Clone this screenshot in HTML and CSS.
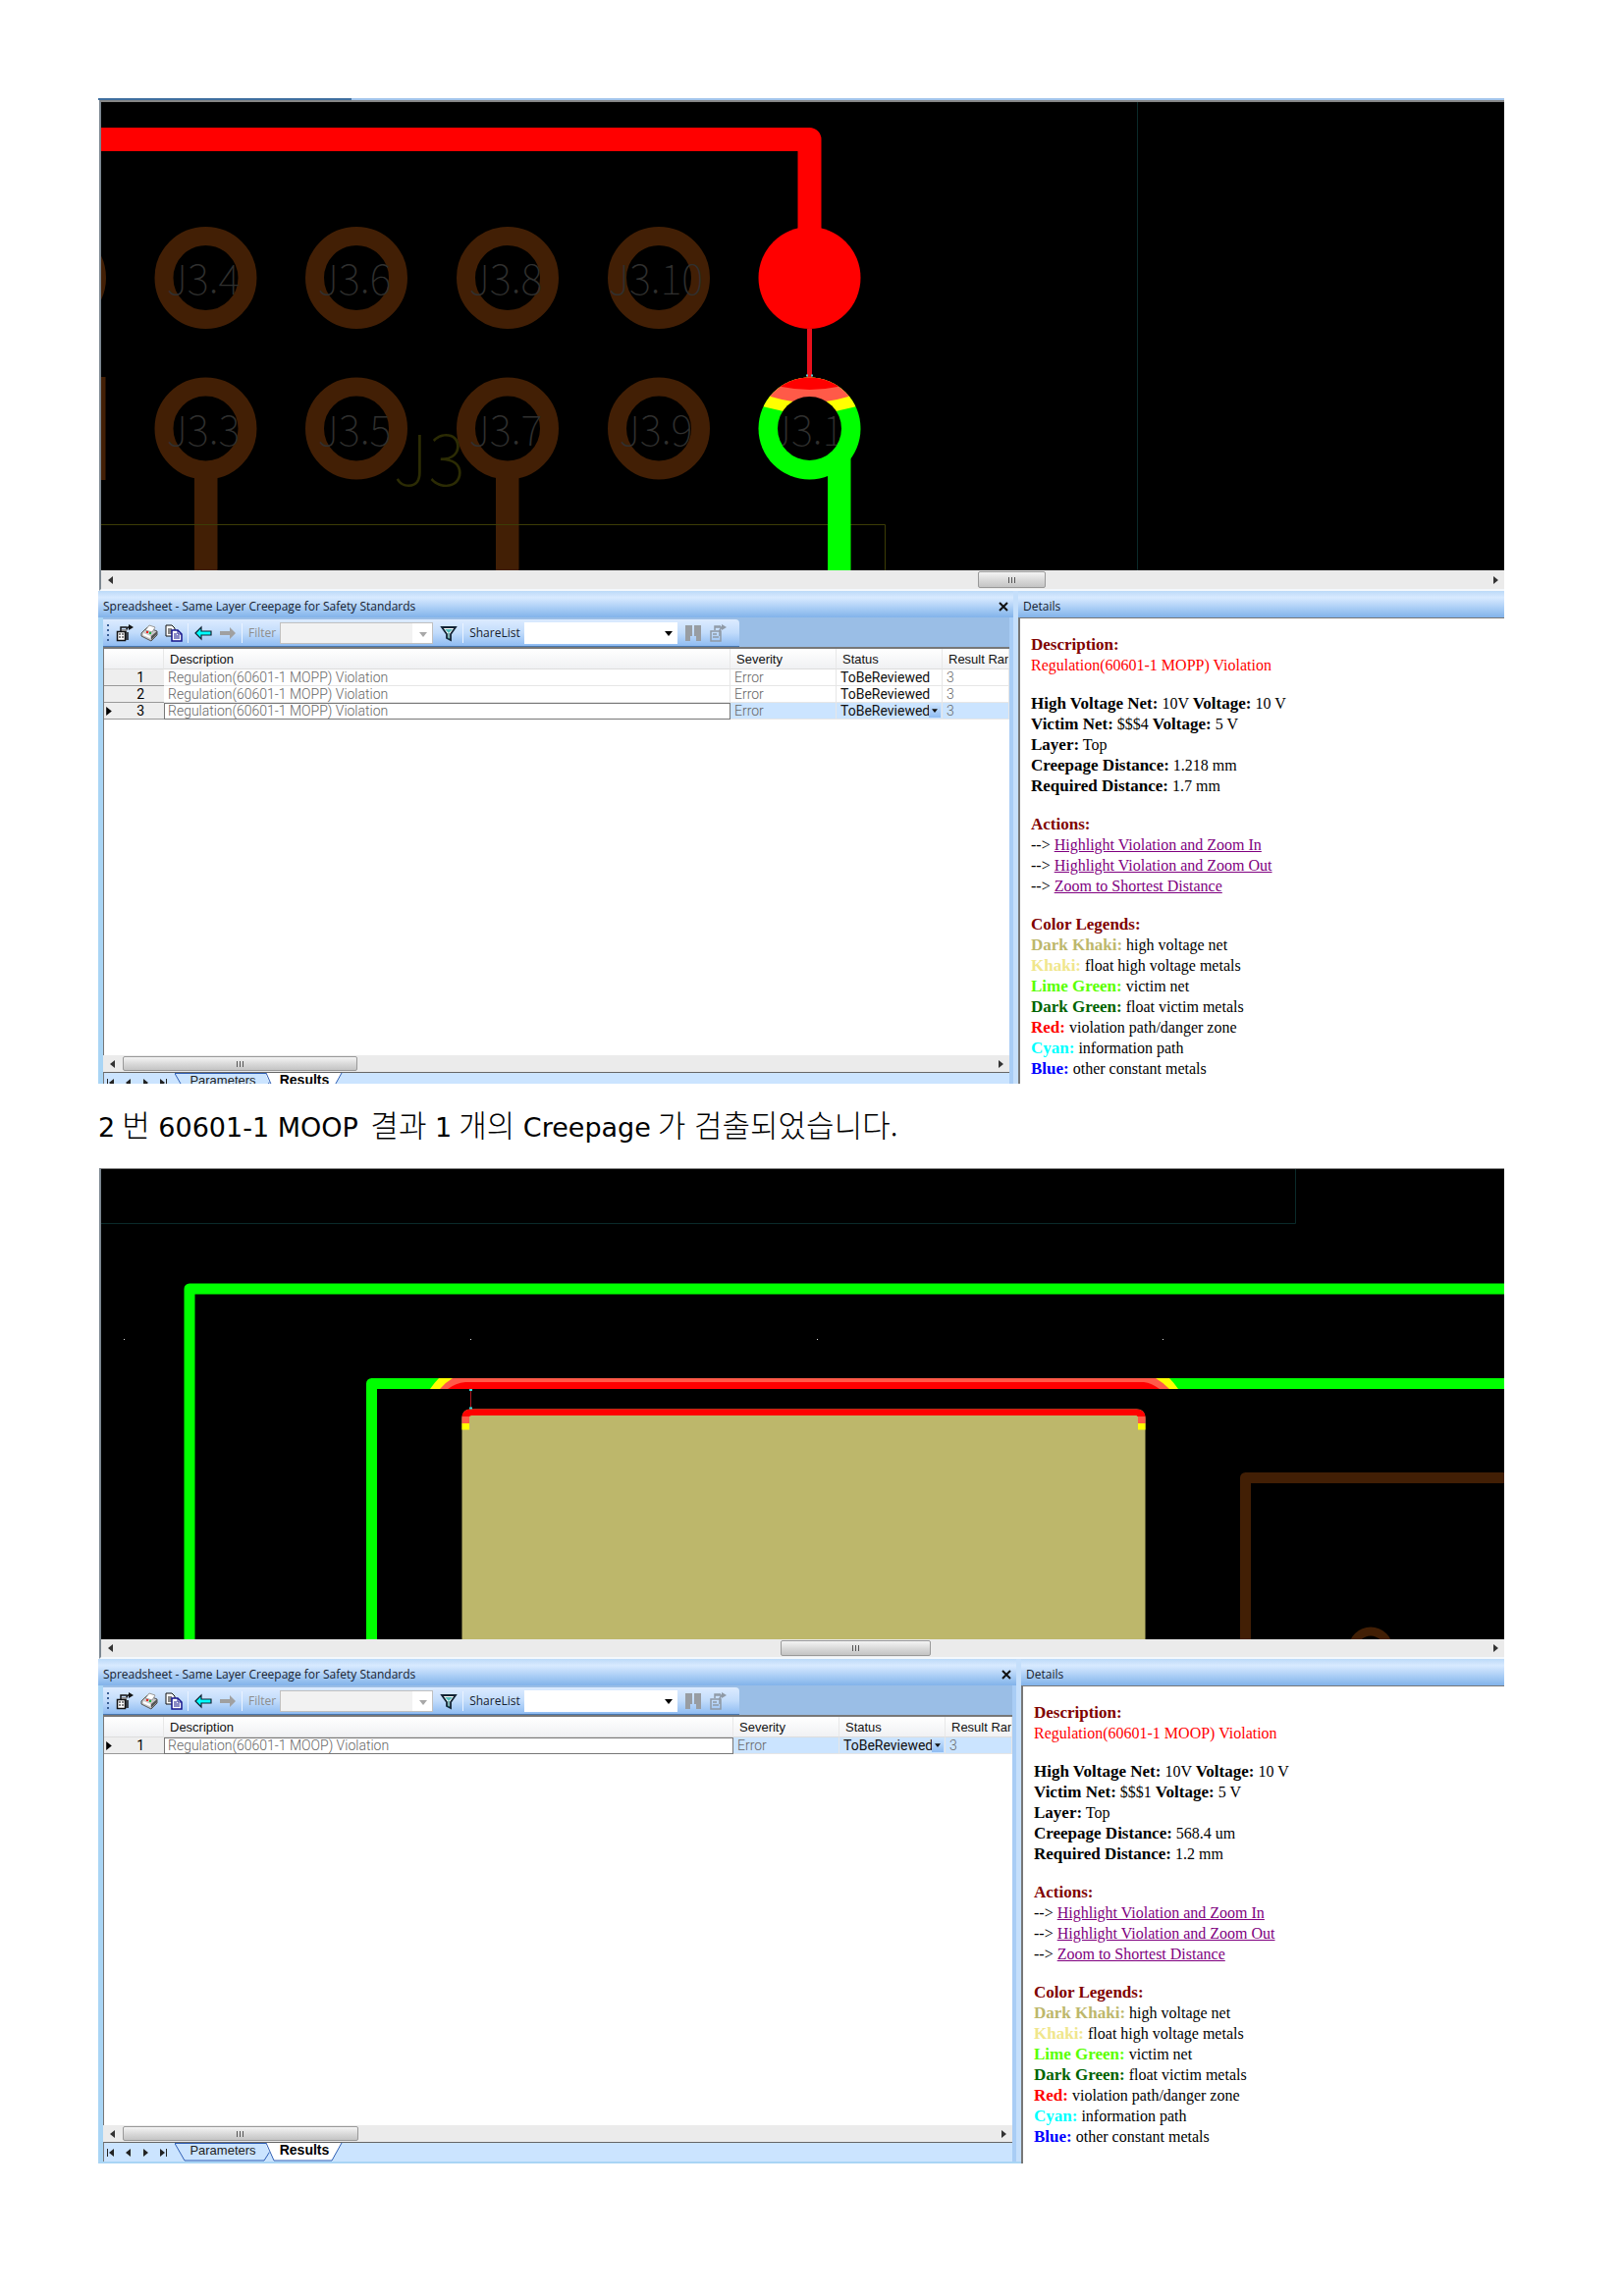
FILE: index.html
```html
<!DOCTYPE html>
<html lang="ko">
<head>
<meta charset="utf-8">
<title>Creepage 검출 결과</title>
<link rel="stylesheet" href="styles.css">
</head>
<body>
<svg class="symbols" aria-hidden="true">
  <symbol id="i-props" viewBox="0 0 18 18"><path d="M1.500 7.500h8v9h-8z" fill="#fff" stroke="#111" stroke-width="1.500"/><path d="M3 10h2M6 10h2M3 13h2M6 13h2" stroke="#111"/><path d="M5 7V3h6M10 16V7l2-4h3M12 16V8" fill="none" stroke="#111" stroke-width="1.500"/><path d="M6 5h5v2H6z" fill="#888"/><path d="M13 0l5 3-5 3z" fill="#111"/></symbol>
  <symbol id="i-print" viewBox="0 0 18 18"><path d="M1 9l6-6 10 4v4l-6 6-10-5z" fill="#c9c9c9" stroke="#555"/><path d="M5 6l4-5 6 2-3 5z" fill="#fff" stroke="#999"/><path d="M11 16l6-6v-3l-6 5z" fill="#555"/><path d="M3 10l7 3" stroke="#fff" stroke-width="2"/><path d="M6 8h2" stroke="#e22" stroke-width="2"/><path d="M9 9h2" stroke="#2b4" stroke-width="2"/></symbol>
  <symbol id="i-copy" viewBox="0 0 18 18"><path d="M1 1h6l3 3v8H1z" fill="#fff" stroke="#111"/><path d="M3 5h4M3 7h5M3 9h5" stroke="#111"/><path d="M7 6h6l4 4v7H7z" fill="#fff" stroke="#14148c" stroke-width="1.500"/><path d="M13 6v4h4M9 10h3M9 12h6M9 14h6" fill="none" stroke="#14148c"/></symbol>
  <symbol id="i-back" viewBox="0 0 18 18"><path d="M1 9l6-6v4h10v4H7v4z" fill="#0ff" stroke="#123" stroke-width="1.200"/></symbol>
  <symbol id="i-forward" viewBox="0 0 18 18"><path d="M17 9l-6-6v4H1v4h10v4z" fill="#a0a0a0"/></symbol>
  <symbol id="i-filter" viewBox="0 0 18 18"><path d="M2 3h14l-5 7v6l-4-2v-4z" fill="#fff" stroke="#123" stroke-width="1.800"/><path d="M5 5h8l-4 4z" fill="#5bb"/><path d="M9 9v6" stroke="#066"/></symbol>
  <symbol id="i-find" viewBox="0 0 18 18"><path d="M1 1h7v11H6v5H1zM10 1h7v16h-5v-5h-2z" fill="#989da3"/></symbol>
  <symbol id="i-export" viewBox="0 0 18 18"><path d="M2 7h10v10H2zM6 6V2h6" fill="none" stroke="#8f99a5" stroke-width="1.500"/><path d="M4 10h4M4 13h6M11 12V6l2-3h3M6 3h8" fill="none" stroke="#8f99a5" stroke-width="1.500"/><path d="M13 0l5 3-5 3z" fill="#8f99a5"/></symbol>
  <symbol id="i-down" viewBox="0 0 8 5"><path d="M0 0h8L4 5z" fill="currentColor"/></symbol>
  <symbol id="i-left" viewBox="0 0 5 8"><path d="M5 0v8L0 4z" fill="currentColor"/></symbol>
  <symbol id="i-right" viewBox="0 0 5 8"><path d="M0 0v8l5-4z" fill="currentColor"/></symbol>
  <symbol id="i-first" viewBox="0 0 7 8"><path d="M0 0h1v8H0zM7 0v8L2 4z" fill="currentColor"/></symbol>
  <symbol id="i-last" viewBox="0 0 7 8"><path d="M6 0h1v8H6zM0 0v8l5-4z" fill="currentColor"/></symbol>
  <symbol id="i-close" viewBox="0 0 10 10"><path d="M1 1l8 8M9 1l-8 8" stroke="#111" stroke-width="2"/></symbol>
</svg>
<main class="page">

<section class="shot shot-mopp" aria-label="60601-1 MOPP">
  <div class="board">
    <svg viewBox="103 104 1429 477" role="img" aria-label="J3 connector">
      <rect x="103" y="104" width="1429" height="477" fill="#000"/>
      <g fill="none" stroke="#421f05" stroke-width="19">
        <circle cx="56" cy="283" r="42.500"/>
        <circle cx="209.500" cy="283" r="42.500"/><circle cx="363" cy="283" r="42.500"/><circle cx="517" cy="283" r="42.500"/><circle cx="671" cy="283" r="42.500"/>
        <circle cx="209.500" cy="436.500" r="42.500"/><circle cx="363" cy="436.500" r="42.500"/><circle cx="517" cy="436.500" r="42.500"/><circle cx="671" cy="436.500" r="42.500"/>
      </g>
      <path d="M103 384h4.500v105H103zM198 486h23.500v95H198zM505 486h23.500v95H505z" fill="#421f05"/>
      <path d="M103 534.500h798.500V581" fill="none" stroke="#3c3c06"/>
      <path d="M1158.500 104v477" stroke="#0a2a2a"/>
      <g class="pin-names">
        <text x="207" y="300">J3.4</text><text x="361" y="300">J3.6</text><text x="515" y="300">J3.8</text><text x="668" y="300">J3.10</text>
        <text x="207" y="454">J3.3</text><text x="361" y="454">J3.5</text><text x="515" y="454">J3.7</text><text x="668" y="454">J3.9</text>
      </g>
      <text class="part-name" x="437" y="495">J3</text>
      <path d="M103 142h721.500V283" fill="none" stroke="#f00" stroke-width="24" stroke-linejoin="round"/>
      <circle cx="824.500" cy="283" r="52" fill="#f00"/>
      <path d="M824.500 335v52" stroke="#e8101c" stroke-width="5"/>
      <path d="M843 450h23.500v131H843z" fill="#0f0"/>
      <clipPath id="pad"><circle cx="824.500" cy="436.500" r="52"/></clipPath>
      <g clip-path="url(#pad)">
        <rect x="772" y="384" width="105" height="105" fill="#0f0"/>
        <path d="M772 384h105v29l-26 6q-26 6-53 0l-26-6z" fill="#ff0"/>
        <path d="M772 384h105v16l-13 4q-40 12-79 0l-13-4z" fill="#ff5a48"/>
        <path d="M772 384h105v7l-24 3q-28 6-57 0l-24-3z" fill="#f00"/>
      </g>
      <circle cx="824.500" cy="436.500" r="32.500" fill="#000"/>
      <path d="M821 382.500h2M826 382.500h2" stroke="#5cc" stroke-width="2"/>
      <clipPath id="drill"><circle cx="824.500" cy="436.500" r="32.500"/></clipPath>
      <g class="pin-names" clip-path="url(#drill)"><text x="833" y="454">J3.11</text></g>
    </svg>
  </div>
  <div class="scrollbar board-scroll"><button aria-label="Scroll left"><svg class="tri"><use href="#i-left"/></svg></button><div class="track"><span class="thumb"><i></i><i></i><i></i></span></div><button aria-label="Scroll right"><svg class="tri"><use href="#i-right"/></svg></button></div>
  <div class="panes">
    <section class="sheet">
      <header class="titlebar"><h2>Spreadsheet - Same Layer Creepage for Safety Standards</h2><button aria-label="Close"><svg class="close"><use href="#i-close"/></svg></button></header>
      <div class="sheet-body">
        <div class="toolrow"><div class="toolbar">
          <span class="grip"></span>
          <button aria-label="Properties"><svg class="icon"><use href="#i-props"/></svg></button>
          <button aria-label="Print"><svg class="icon"><use href="#i-print"/></svg></button>
          <button aria-label="Copy"><svg class="icon"><use href="#i-copy"/></svg></button>
          <span class="sep"></span>
          <button aria-label="Back"><svg class="icon"><use href="#i-back"/></svg></button>
          <button aria-label="Forward" disabled><svg class="icon"><use href="#i-forward"/></svg></button>
          <span class="sep"></span>
          <label class="muted" for="filter1">Filter</label>
          <span class="combo combo-off"><select id="filter1" disabled><option></option></select><svg class="down"><use href="#i-down"/></svg></span>
          <button aria-label="Apply filter"><svg class="icon"><use href="#i-filter"/></svg></button>
          <span class="sep"></span>
          <label for="share1">ShareList</label>
          <span class="combo"><select id="share1"><option></option></select><svg class="down"><use href="#i-down"/></svg></span>
          <button aria-label="Find" disabled><svg class="icon"><use href="#i-find"/></svg></button>
          <button aria-label="Export" disabled><svg class="icon"><use href="#i-export"/></svg></button>
        </div></div>
        <div class="grid">
          <table>
            <colgroup><col class="c-num"><col><col class="c-mid"><col class="c-mid"><col class="c-last"></colgroup>
            <thead><tr><th></th><th>Description</th><th>Severity</th><th>Status</th><th>Result Range</th></tr></thead>
            <tbody>
              <tr><th>1</th><td>Regulation(60601-1 MOPP) Violation</td><td>Error</td><td class="status">ToBeReviewed</td><td>3</td></tr>
              <tr><th>2</th><td>Regulation(60601-1 MOPP) Violation</td><td>Error</td><td class="status">ToBeReviewed</td><td>3</td></tr>
              <tr class="current"><th><svg class="marker"><use href="#i-right"/></svg>3</th><td>Regulation(60601-1 MOPP) Violation</td><td>Error</td><td class="status">ToBeReviewed<button class="pick" aria-label="Choose status"><svg><use href="#i-down"/></svg></button></td><td>3</td></tr>
            </tbody>
          </table>
        </div>
        <div class="scrollbar grid-scroll"><button aria-label="Scroll left"><svg class="tri"><use href="#i-left"/></svg></button><div class="track"><span class="thumb"><i></i><i></i><i></i></span></div><button aria-label="Scroll right"><svg class="tri"><use href="#i-right"/></svg></button></div>
        <nav class="tabs">
          <button aria-label="First"><svg class="nav"><use href="#i-first"/></svg></button><button aria-label="Previous"><svg class="nav"><use href="#i-left"/></svg></button><button aria-label="Next"><svg class="nav"><use href="#i-right"/></svg></button><button aria-label="Last"><svg class="nav"><use href="#i-last"/></svg></button>
          <button class="tab"><svg viewBox="0 0 98 19"><path d="M0 .5h93l4 8-6 9.500H10z" fill="#cbe4ff" stroke="#2f5fb5"/></svg>Parameters</button><button class="tab tab-on"><svg viewBox="0 0 78 19"><path d="M0 0h77L67 18H8L0 3z" fill="#fff"/><path d="M0 0l8 18h59L77 0" fill="none" stroke="#2f5fb5"/></svg>Results</button>
        </nav>
      </div>
    </section>
    <section class="details">
      <header class="titlebar"><h2>Details</h2></header>
      <div class="report">
        <div><h3>Description:</h3><p class="alert">Regulation(60601-1 MOPP) Violation</p></div>
        <div><p><b>High Voltage Net:</b> 10V <b>Voltage:</b> 10 V</p><p><b>Victim Net:</b> $$$4 <b>Voltage:</b> 5 V</p><p><b>Layer:</b> Top</p><p><b>Creepage Distance:</b> 1.218 mm</p><p><b>Required Distance:</b> 1.7 mm</p></div>
        <div><h3>Actions:</h3><p>--&gt; <a href="#">Highlight Violation and Zoom In</a></p><p>--&gt; <a href="#">Highlight Violation and Zoom Out</a></p><p>--&gt; <a href="#">Zoom to Shortest Distance</a></p></div>
        <div><h3>Color Legends:</h3><p><b class="dark-khaki">Dark Khaki:</b> high voltage net</p><p><b class="khaki">Khaki:</b> float high voltage metals</p><p><b class="lime">Lime Green:</b> victim net</p><p><b class="dark-green">Dark Green:</b> float victim metals</p><p><b class="red">Red:</b> violation path/danger zone</p><p><b class="cyan">Cyan:</b> information path</p><p><b class="blue">Blue:</b> other constant metals</p></div>
      </div>
    </section>
  </div>
</section>

<p class="caption">2<span class="ko joined">번</span> 60601-1 MOOP <span class="ko">결과</span> 1<span class="ko joined">개의</span> Creepage<span class="ko joined">가 검출되었습니다.</span></p>

<section class="shot shot-moop" aria-label="60601-1 MOOP">
  <div class="board">
    <svg viewBox="103 1191 1429 479" role="img" aria-label="High voltage area">
      <rect x="103" y="1191" width="1429" height="479" fill="#000"/>
      <path d="M103 1246.500h1216.500V1191" fill="none" stroke="#0a2a2a"/>
      <path d="M193 1670V1313H1532" fill="none" stroke="#0f0" stroke-width="11" stroke-linejoin="round"/>
      <path d="M378.500 1670V1409.500H1532" fill="none" stroke="#0f0" stroke-width="11" stroke-linejoin="round"/>
      <path d="M438 1415q4-6 9-11H1191q5 5 9 11z" fill="#ff0"/>
      <path d="M448 1415q6-7 13-11H1177q7 4 14 11z" fill="#ff5a48"/>
      <path d="M456 1415q8-6 18-7H1165q8 1 16 7z" fill="#f00"/>
      <path d="M470.500 1670V1445q0-9.500 9-9.500h678q9 0 9 9.500v225z" fill="#bdb76b"/>
      <path d="M470.500 1443q1-7.500 9-7.500h678q8 0 9 7.500h-8l-1-1H480l-2 1z" fill="#f00"/>
      <path d="M470.500 1443h7.500v7h-7.500zM1159 1443h7.500v7h-7.500z" fill="#ff5a48"/>
      <path d="M470.500 1450h7.500v6.500h-7.500zM1159 1450h7.500v6.500h-7.500z" fill="#ff0"/>
      <path d="M479.500 1415v20" stroke="#b01820"/>
      <path d="M478 1416h3M478 1434.500h3" stroke="#3dd" stroke-width="2"/>
      <path d="M126 1364.500h1M479 1364.500h1M832 1364.500h1M1184 1364.500h1" stroke="#ddd"/>
      <path d="M1268.500 1670V1505.500H1532" fill="none" stroke="#421f05" stroke-width="11" stroke-linejoin="round"/>
      <circle cx="1396" cy="1680" r="18" fill="none" stroke="#421f05" stroke-width="9"/>
    </svg>
  </div>
  <div class="scrollbar board-scroll"><button aria-label="Scroll left"><svg class="tri"><use href="#i-left"/></svg></button><div class="track"><span class="thumb"><i></i><i></i><i></i></span></div><button aria-label="Scroll right"><svg class="tri"><use href="#i-right"/></svg></button></div>
  <div class="panes">
    <section class="sheet">
      <header class="titlebar"><h2>Spreadsheet - Same Layer Creepage for Safety Standards</h2><button aria-label="Close"><svg class="close"><use href="#i-close"/></svg></button></header>
      <div class="sheet-body">
        <div class="toolrow"><div class="toolbar">
          <span class="grip"></span>
          <button aria-label="Properties"><svg class="icon"><use href="#i-props"/></svg></button>
          <button aria-label="Print"><svg class="icon"><use href="#i-print"/></svg></button>
          <button aria-label="Copy"><svg class="icon"><use href="#i-copy"/></svg></button>
          <span class="sep"></span>
          <button aria-label="Back"><svg class="icon"><use href="#i-back"/></svg></button>
          <button aria-label="Forward" disabled><svg class="icon"><use href="#i-forward"/></svg></button>
          <span class="sep"></span>
          <label class="muted" for="filter2">Filter</label>
          <span class="combo combo-off"><select id="filter2" disabled><option></option></select><svg class="down"><use href="#i-down"/></svg></span>
          <button aria-label="Apply filter"><svg class="icon"><use href="#i-filter"/></svg></button>
          <span class="sep"></span>
          <label for="share2">ShareList</label>
          <span class="combo"><select id="share2"><option></option></select><svg class="down"><use href="#i-down"/></svg></span>
          <button aria-label="Find" disabled><svg class="icon"><use href="#i-find"/></svg></button>
          <button aria-label="Export" disabled><svg class="icon"><use href="#i-export"/></svg></button>
        </div></div>
        <div class="grid">
          <table>
            <colgroup><col class="c-num"><col><col class="c-mid"><col class="c-mid"><col class="c-last"></colgroup>
            <thead><tr><th></th><th>Description</th><th>Severity</th><th>Status</th><th>Result Range</th></tr></thead>
            <tbody>
              <tr class="current"><th><svg class="marker"><use href="#i-right"/></svg>1</th><td>Regulation(60601-1 MOOP) Violation</td><td>Error</td><td class="status">ToBeReviewed<button class="pick" aria-label="Choose status"><svg><use href="#i-down"/></svg></button></td><td>3</td></tr>
            </tbody>
          </table>
        </div>
        <div class="scrollbar grid-scroll"><button aria-label="Scroll left"><svg class="tri"><use href="#i-left"/></svg></button><div class="track"><span class="thumb"><i></i><i></i><i></i></span></div><button aria-label="Scroll right"><svg class="tri"><use href="#i-right"/></svg></button></div>
        <nav class="tabs">
          <button aria-label="First"><svg class="nav"><use href="#i-first"/></svg></button><button aria-label="Previous"><svg class="nav"><use href="#i-left"/></svg></button><button aria-label="Next"><svg class="nav"><use href="#i-right"/></svg></button><button aria-label="Last"><svg class="nav"><use href="#i-last"/></svg></button>
          <button class="tab"><svg viewBox="0 0 98 19"><path d="M0 .5h93l4 8-6 9.500H10z" fill="#cbe4ff" stroke="#2f5fb5"/></svg>Parameters</button><button class="tab tab-on"><svg viewBox="0 0 78 19"><path d="M0 0h77L67 18H8L0 3z" fill="#fff"/><path d="M0 0l8 18h59L77 0" fill="none" stroke="#2f5fb5"/></svg>Results</button>
        </nav>
      </div>
    </section>
    <section class="details">
      <header class="titlebar"><h2>Details</h2></header>
      <div class="report">
        <div><h3>Description:</h3><p class="alert">Regulation(60601-1 MOOP) Violation</p></div>
        <div><p><b>High Voltage Net:</b> 10V <b>Voltage:</b> 10 V</p><p><b>Victim Net:</b> $$$1 <b>Voltage:</b> 5 V</p><p><b>Layer:</b> Top</p><p><b>Creepage Distance:</b> 568.4 um</p><p><b>Required Distance:</b> 1.2 mm</p></div>
        <div><h3>Actions:</h3><p>--&gt; <a href="#">Highlight Violation and Zoom In</a></p><p>--&gt; <a href="#">Highlight Violation and Zoom Out</a></p><p>--&gt; <a href="#">Zoom to Shortest Distance</a></p></div>
        <div><h3>Color Legends:</h3><p><b class="dark-khaki">Dark Khaki:</b> high voltage net</p><p><b class="khaki">Khaki:</b> float high voltage metals</p><p><b class="lime">Lime Green:</b> victim net</p><p><b class="dark-green">Dark Green:</b> float victim metals</p><p><b class="red">Red:</b> violation path/danger zone</p><p><b class="cyan">Cyan:</b> information path</p><p><b class="blue">Blue:</b> other constant metals</p></div>
      </div>
    </section>
  </div>
</section>
</main>
</body>
</html>
```
FILE: styles.css
```css
* { box-sizing: border-box; }
body { margin: 0; background: #fff; color: #000; }
h2, h3, p { margin: 0; font-weight: normal; }
button { margin: 0; padding: 0; border: 0; background: none; color: inherit; font: inherit; display: flex; align-items: center; justify-content: center; }
svg { display: block; }
.symbols { width: 0; height: 0; position: absolute; }
.page { padding: 100px 121px 136px 100px; }

.caption { height: 86px; padding-top: 21px; font: 27px/40px "DejaVu Sans", "Noto Sans CJK KR", sans-serif; }
.ko { margin-left: 4px; font: 300 31px/40px "Noto Sans CJK KR", sans-serif; }
.joined { margin-left: 7px; }

/* board view */
.board { margin-left: 1px; border-left: 2px solid #7c8791; }
.board svg { width: 100%; height: auto; }
.shot-mopp .board { border-top: 2px solid #858585; }
.shot-mopp::before { content: ""; display: block; height: 2px; background: linear-gradient(90deg, #3f6f9f 18%, #a3c5ec 18%); }
.shot-moop .board { border-top: 1px solid #858585; }
.pin-names { font: 100 42px "Noto Sans CJK KR", sans-serif; fill: #30302f; text-anchor: middle; }
.part-name { font: 100 72px "Noto Sans CJK KR", sans-serif; fill: #2c2c04; text-anchor: middle; }

/* scroll bars */
.scrollbar { display: flex; align-items: stretch; background: #ebebeb; color: #333; }
.scrollbar > button { width: 18px; }
.tri { width: 5px; height: 8px; }
.track { flex: 1; padding: 1px 0; display: flex; }
.thumb { display: flex; align-items: center; justify-content: center; gap: 2px; border: 1px solid #999; border-radius: 2px; background: linear-gradient(#f4f4f4, #d8d8d8 55%, #c4c4c4); }
.thumb i { width: 1px; height: 6px; background: #555; }
.board-scroll { height: 20px; margin-left: 1px; border-left: 2px solid #7c8791; border-bottom: 2px solid #f4f8fc; }
.shot-mopp .board-scroll { height: 21px; }
.shot-mopp .board-scroll .thumb { width: 5%; margin-left: 62.800%; }
.shot-moop .board-scroll .thumb { width: 11%; margin-left: 48.400%; }
.grid-scroll { height: 17px; }
.grid-scroll .track { padding-left: 2px; }
.grid-scroll .thumb { width: 27%; }

/* docked panes */
.panes { display: grid; grid-template-columns: minmax(0, 937fr) minmax(0, 495fr); background: #c5dffb; }
.shot-mopp .panes { height: 502px; overflow: hidden; }
.shot-moop .panes { grid-template-columns: minmax(0, 940fr) minmax(0, 492fr); }
.titlebar { height: 27px; padding: 4px 5px 0; display: flex; align-items: center; justify-content: space-between; background: linear-gradient(#bcdaf8, #d8eaff 25%, #a9cdf5 65%, #82b3ea); color: #16202e; }
.titlebar h2 { font: 12px/18px "Open Sans", sans-serif; white-space: nowrap; }
.close { width: 10px; height: 10px; }
.sheet { min-width: 0; padding-right: 5px; }
.shot-moop .sheet { border-bottom: 2px solid #a9d5f5; }
.sheet-body { border-left: 5px solid #a9d5f5; border-right: 4px solid #a9cdf5; }
.toolrow { height: 30px; padding-top: 2px; background: #9abee6; }
.toolbar { width: 648px; height: 28px; padding: 0 4px; display: flex; align-items: center; gap: 7px; border-radius: 0 4px 0 0; border-bottom: 1px solid #4878b0; background: linear-gradient(#dcebff, #c2dcfb 50%, #8fbcf2); color: #16202e; font: 12px/18px "Open Sans", sans-serif; }
.toolbar label { margin-right: -3px; white-space: nowrap; }
.muted { color: #8d8d8d; }
.grip { width: 2px; height: 17px; background: repeating-linear-gradient(#3a5f94 0 2px, transparent 2px 5px); }
.sep { width: 1px; height: 20px; margin: 0 -1px 0 -2px; background: #eaf3ff; }
.icon { width: 18px; height: 18px; }
.combo { position: relative; width: 156px; height: 22px; background: #fff; }
.combo select { appearance: none; width: 100%; height: 100%; border: 0; border-radius: 0; background: #fff; }
.combo-off { border: 1px solid #c0c0c0; }
.combo-off select { width: 134px; background: #ececec; }
.down { position: absolute; right: 5px; top: 9px; width: 8px; height: 5px; color: #000; }
.combo-off .down { color: #a8a8a8; }

.grid { height: 416px; border-top: 2px solid #777; border-left: 1px solid #777; background: #fff; overflow: hidden; }
.shot-moop .grid { height: 418px; }
table { width: 100%; table-layout: fixed; border-collapse: separate; border-spacing: 0; font: 14px/15px Roboto, sans-serif; }
.c-num { width: 61px; }
.c-mid { width: 108px; }
.c-last { width: 68px; }
th, td { padding: 0 0 0 4px; text-align: left; font-weight: 300; white-space: nowrap; overflow: hidden; }
thead th { height: 21px; padding-left: 6px; font: 13px/15px "Liberation Sans", sans-serif; color: #111; background: linear-gradient(#fff, #f0f1f3); border-right: 1px solid #e8e8e8; border-bottom: 1px solid #ddd; }
tbody th { position: relative; height: 17px; padding-right: 20px; text-align: right; font-weight: 400; background: #eee; border-bottom: 1px solid #999; }
tbody td { height: 17px; color: #666; border-right: 1px solid #e6e6e6; border-bottom: 1px solid #e6e6e6; }
tbody .status { position: relative; color: #111; font-weight: 400; }
.current td { background: #cbe4ff; }
.current td:nth-child(2) { background: #fff; border: 1px solid #777; padding-left: 3px; }
.marker { position: absolute; left: 2px; top: 4px; width: 6px; height: 9px; }
.pick { position: absolute; right: 1px; top: 1px; width: 12px; height: 14px; background: linear-gradient(#cbe4ff, #8fbcf2); color: #111; }
.pick svg { width: 6px; height: 4px; }

.tabs { height: 20px; display: flex; align-items: flex-start; border-top: 1px solid #666; border-left: 1px solid #777; background: #cbe4ff; color: #222; font: 13px/15px "Liberation Sans", sans-serif; }
.tabs > button { width: 18px; height: 19px; padding-right: 5px; }
.nav { width: 7px; height: 8px; }
.tabs > .tab { position: relative; z-index: 0; width: 98px; height: 19px; padding: 0 0 5px; }
.tab svg { position: absolute; inset: 0; z-index: -1; width: 100%; height: 100%; }
.tabs > .tab-on { width: 78px; margin-left: -5px; font-size: 14px; font-weight: bold; color: #000; }

/* details report */
.details { min-width: 0; display: flex; flex-direction: column; }
.report { flex: 1; padding: 16px 11px 0; display: flex; flex-direction: column; gap: 18px; border-top: 1px solid #777; border-left: 2px solid #777; background: #fff; font: 16px/21px "Liberation Serif", serif; }
.report h3, .report b { font-size: 17px; font-weight: bold; line-height: 21px; }
.report h3 { color: #800000; }
.report a { color: #800080; }
.alert, .red { color: #f00; }
.dark-khaki { color: #bdb76b; }
.khaki { color: #f0e68c; }
.lime { color: #5aff00; }
.dark-green { color: #006400; }
.cyan { color: #0ff; }
.blue { color: #00f; }
```
